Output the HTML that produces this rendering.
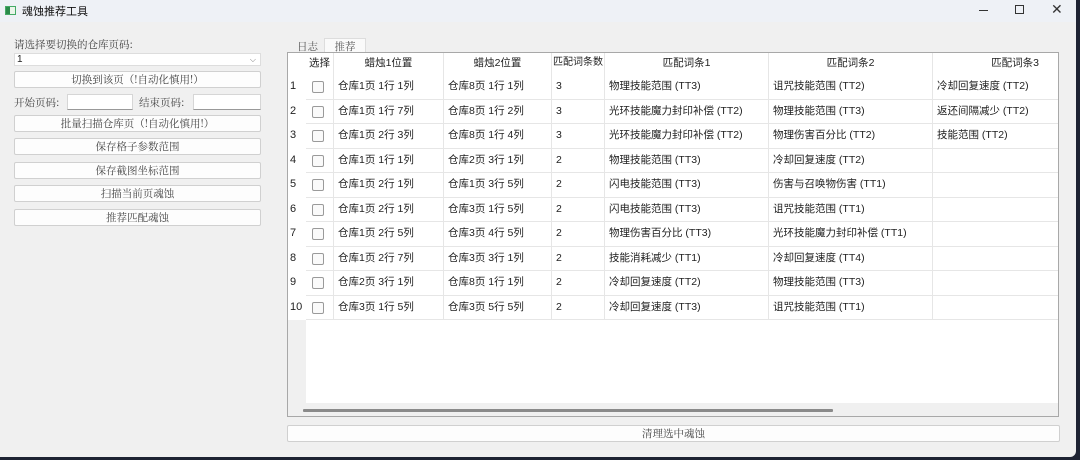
<!DOCTYPE html>
<html><head><meta charset="utf-8"><style>
*{box-sizing:border-box;margin:0;padding:0}
body{width:1080px;height:460px;overflow:hidden;background:#1e2333;position:relative;font-family:"Liberation Sans","Noto Sans CJK SC",sans-serif;font-size:11px;color:#222}
#win{position:absolute;left:0;top:0;width:1076px;height:457px;background:#f0f0f0;border-radius:0 0 6px 0}
#title{position:absolute;left:0;top:0;width:1076px;height:22px;background:#eef1f6}
.serif{font-family:"Noto Serif CJK SC","Liberation Serif",serif;font-size:10.5px;color:#444}
.btn{position:absolute;left:14px;width:247px;height:17px;background:#fdfdfd;border:1px solid #d0d0d0;border-radius:2px;text-align:center;line-height:15px}
.inp{position:absolute;height:16px;background:#fff;border:1px solid #d6d6d6;border-bottom-color:#999}
.a{position:absolute}
#tbl{position:absolute;left:287px;top:52px;width:772px;height:365px;border:1px solid #a8a8a8;background:#fff;overflow:hidden}
.row{position:absolute;left:0;width:780px}
.c{position:absolute;top:0;height:100%;border-right:1px solid #e6e6e6;border-bottom:1px solid #e6e6e6;line-height:23px;padding-left:4px;white-space:nowrap;overflow:hidden;font-size:10.5px}
.h .c{text-align:center;padding:0;line-height:20px;border-bottom:none}
.cb{position:absolute;left:6px;top:6px;width:12px;height:12px;border:1px solid #9a9a9a;border-radius:2px;background:#fafafa}
</style></head><body><div id="win">
<div id="title">
<div class="a" style="left:5px;top:6px;width:11px;height:9px;border:1px solid #4a6;background:#eaf5ea"></div>
<div class="a" style="left:6px;top:7px;width:4px;height:7px;background:#2a8a4a"></div>
<div class="a" style="left:22px;top:3px;font-size:11px;color:#111">魂蚀推荐工具</div>
<div class="a" style="left:979px;top:10px;width:9px;height:1px;background:#333"></div>
<div class="a" style="left:1015px;top:5px;width:9px;height:9px;border:1px solid #333"></div>
<div class="a" style="left:1051px;top:1px;font-size:14px;color:#333">✕</div>
</div>
<div class="a serif" style="left:14px;top:37px">请选择要切换的仓库页码:</div>
<div class="inp" style="left:14px;top:53px;width:247px;height:13px;border-color:#ddd;font-size:10px;line-height:11px;padding-left:2px">1<span style="position:absolute;right:4px;top:0;color:#777;font-size:8px">⌵</span></div>
<div class="btn serif" style="top:71px">切换到该页（!自动化慎用!）</div>
<div class="a serif" style="left:14px;top:95px">开始页码:</div>
<div class="inp" style="left:67px;top:94px;width:66px"></div>
<div class="a serif" style="left:139px;top:95px">结束页码:</div>
<div class="inp" style="left:193px;top:94px;width:68px"></div>
<div class="btn serif" style="top:115px">批量扫描仓库页（!自动化慎用!）</div>
<div class="btn serif" style="top:138px">保存格子参数范围</div>
<div class="btn serif" style="top:162px">保存截图坐标范围</div>
<div class="btn serif" style="top:185px">扫描当前页魂蚀</div>
<div class="btn serif" style="top:209px">推荐匹配魂蚀</div>
<div class="a serif" style="left:297px;top:39px;color:#555">日志</div>
<div class="a serif" style="left:324px;top:38px;width:42px;height:15px;background:#fafafa;border:1px solid #ddd;border-bottom:none;text-align:center;color:#555">推荐</div>
<div id="tbl">
<div class="a" style="left:0;top:0;width:18px;height:365px;background:#f0f0f0"></div>
<div class="row h" style="top:0;height:22px;background:#fff">
<div class="c" style="left:0;width:18px;border-right:none"></div>
<div class="c" style="left:18px;width:28px">选择</div>
<div class="c" style="left:46px;width:110px">蜡烛1位置</div>
<div class="c" style="left:156px;width:108px">蜡烛2位置</div>
<div class="c" style="left:264px;width:53px;font-size:10px">匹配词条数</div>
<div class="c" style="left:317px;width:164px">匹配词条1</div>
<div class="c" style="left:481px;width:164px">匹配词条2</div>
<div class="c" style="left:645px;width:164px;border-right:none">匹配词条3</div>
</div>
<div id="rows"></div>
<div class="a" style="left:0;top:350px;width:772px;height:14px;background:#f0f0f0"></div>
<div class="a" style="left:15px;top:356px;width:530px;height:3px;background:#8a8a8a;border-radius:1px"></div>
</div>
<div class="btn serif" style="left:287px;top:425px;width:773px">清理选中魂蚀</div>
</div>
<script>
var d=[["仓库1页 1行 1列","仓库8页 1行 1列","3","物理技能范围 (TT3)","诅咒技能范围 (TT2)","冷却回复速度 (TT2)"],
["仓库1页 1行 7列","仓库8页 1行 2列","3","光环技能魔力封印补偿 (TT2)","物理技能范围 (TT3)","返还间隔减少 (TT2)"],
["仓库1页 2行 3列","仓库8页 1行 4列","3","光环技能魔力封印补偿 (TT2)","物理伤害百分比 (TT2)","技能范围 (TT2)"],
["仓库1页 1行 1列","仓库2页 3行 1列","2","物理技能范围 (TT3)","冷却回复速度 (TT2)",""],
["仓库1页 2行 1列","仓库1页 3行 5列","2","闪电技能范围 (TT3)","伤害与召唤物伤害 (TT1)",""],
["仓库1页 2行 1列","仓库3页 1行 5列","2","闪电技能范围 (TT3)","诅咒技能范围 (TT1)",""],
["仓库1页 2行 5列","仓库3页 4行 5列","2","物理伤害百分比 (TT3)","光环技能魔力封印补偿 (TT1)",""],
["仓库1页 2行 7列","仓库3页 3行 1列","2","技能消耗减少 (TT1)","冷却回复速度 (TT4)",""],
["仓库2页 3行 1列","仓库8页 1行 1列","2","冷却回复速度 (TT2)","物理技能范围 (TT3)",""],
["仓库3页 1行 5列","仓库3页 5行 5列","2","冷却回复速度 (TT3)","诅咒技能范围 (TT1)",""]];
var L=[46,156,264,317,481,645],W=[110,108,53,164,164,164],h="";
d.forEach(function(r,i){var t=Math.round(22+i*24.5),b=Math.round(22+(i+1)*24.5);
h+='<div class="row" style="top:'+t+'px;height:'+(b-t)+'px;background:#fff"><div class="c" style="left:0;width:18px;padding-left:2px;border-right:none;border-bottom:none;font-size:11px">'+(i+1)+'</div><div class="c" style="left:18px;width:28px"><div class="cb"></div></div>';
r.forEach(function(v,j){h+='<div class="c" style="left:'+L[j]+'px;width:'+W[j]+'px">'+v+'</div>'});h+='</div>'});
document.getElementById('rows').innerHTML=h;
</script>
</body></html>
